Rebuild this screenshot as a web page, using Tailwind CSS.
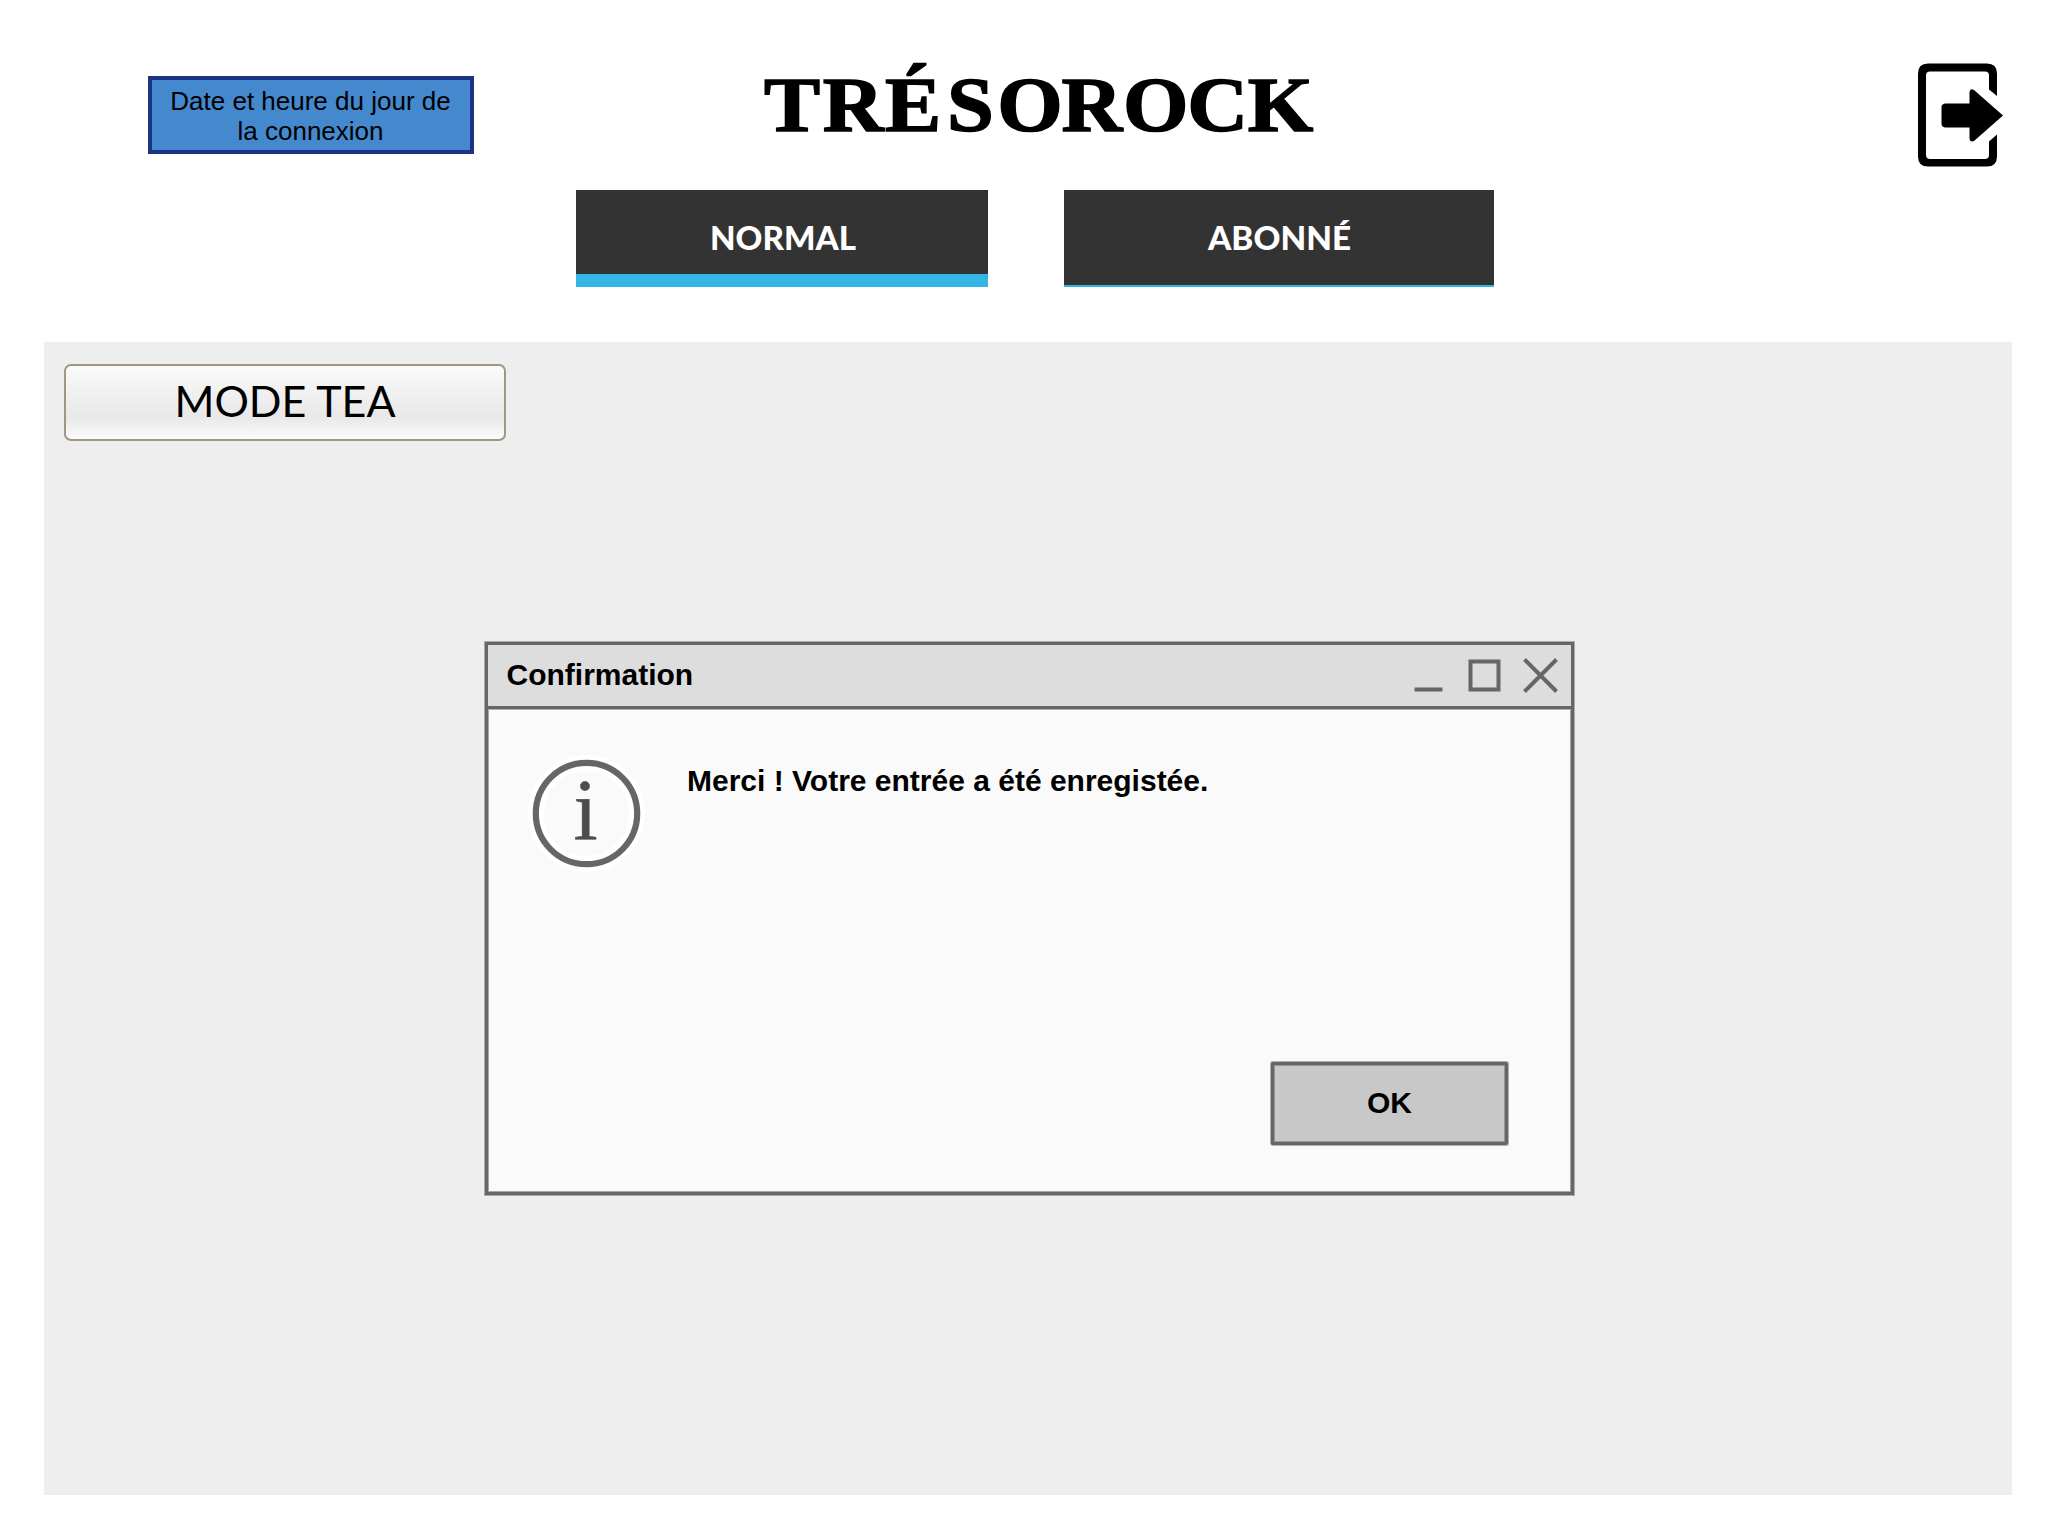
<!DOCTYPE html>
<html lang="fr">
<head>
<meta charset="utf-8">
<title>Trésorock</title>
<script src="https://cdn.jsdelivr.net/npm/@tailwindcss/browser@4"></script>
</head>
<body class="w-[2048px] h-[1536px] overflow-hidden bg-white text-black font-['Liberation_Sans',Arial,sans-serif]">
<header class="h-[190px] flex items-start">
  <div class="mt-[76px] ml-[148px] w-[326px] h-[78px] border-4 border-[#1c3283] bg-[#4488cd] text-center text-[26px] leading-[30px] pt-[6px] pr-[1px]">Date et heure du jour de<br>la connexion</div>
  <h1 class="ml-[286px] mt-[40px]">
    <svg class="block" width="560" height="120" viewBox="760 40 560 120"><text transform="translate(764 0) scale(1.08 1)" x="0 54.500 112 169.500 216 275.500 332.500 392 448" y="131.500" class="font-['Liberation_Serif',serif] font-bold text-[78px]" stroke="#000" stroke-width="1.500">TRÉSOROCK</text></svg>
  </h1>
  <button class="ml-[590px] mt-[60px]" aria-label="Déconnexion">
    <svg class="block" width="100" height="112" viewBox="1910 60 100 112">
      <path d="M1997 96V73.500Q1997 63.500 1987 63.500H1928Q1918 63.500 1918 73.500V156.500Q1918 166.500 1928 166.500H1987Q1997 166.500 1997 156.500V134.500L1989 141.500V155Q1989 159 1985 159H1930Q1926 159 1926 155V75.500Q1926 71.500 1930 71.500H1985Q1989 71.500 1989 75.500V89.500Z"/>
      <path d="M1945 103.500H1969.500V92Q1970 88 1974 90L2003 115.500L1974 141Q1970 142.500 1969.500 138.500V127.500H1945Q1941.500 127 1941.500 123.500V107Q1941.500 104 1945 103.500Z"/>
    </svg>
  </button>
</header>
<nav class="ml-[576px] flex gap-[76px] h-[97px]">
  <button class="w-[412px] bg-[#333] border-b-[13px] border-[#33b5e5]">
    <svg class="block" width="412" height="84" viewBox="576 190 412 84"><text x="710" y="250" textLength="146" lengthAdjust="spacingAndGlyphs" fill="#fff" class="font-[Lato,sans-serif] font-black text-[33px]">NORMAL</text></svg>
  </button>
  <button class="w-[430px] bg-[#333] border-b-2 border-[#33b5e5]">
    <svg class="block" width="430" height="95" viewBox="1064 190 430 95"><text x="1208" y="250" textLength="143" lengthAdjust="spacingAndGlyphs" fill="#fff" class="font-[Lato,sans-serif] font-black text-[33px]">ABONNÉ</text></svg>
  </button>
</nav>
<main class="mt-[55px] ml-[44px] w-[1968px] h-[1153px] bg-[#eee] pt-[22px] pl-[20px]">
  <button class="block w-[442px] h-[77px] rounded-[7px] border-2 border-[#a19683] bg-linear-to-b from-[#fafafa] via-[#e8e8e8] via-70% to-[#fcfcfc]">
    <svg class="block" width="438" height="73" viewBox="66 366 438 73"><text x="174.500" y="417" textLength="221" lengthAdjust="spacingAndGlyphs" class="font-[Lato,sans-serif] font-normal text-[43px]">MODE TEA</text></svg>
  </button>
  <section class="mt-[201px] ml-[421px] w-[1089px] h-[553px] border-3 border-[#666] bg-[#fafafa] shadow-[0_0_0_1px_#aaa,inset_0_0_0_1px_#a5a5a5] flex flex-col">
    <div class="h-[64px] shrink-0 bg-[#ddd] border-b-3 border-[#666] shadow-[0_1px_0_#b0b0b0] flex justify-between">
      <h2 class="pl-[18.5px] pt-[12px] text-[30px] leading-[36px] font-bold">Confirmation</h2>
      <svg class="block" width="161" height="61" viewBox="1410 645 161 61" fill="none" stroke="#666" stroke-width="4"><path d="M1414.500 689.500H1442.500M1470.500 661.500H1498.500V689.500H1470.500ZM1524.500 659.500L1556.500 691.500M1556.500 659.500L1524.500 691.500"/></svg>
    </div>
    <div class="flex pt-[40px] pl-[34px]">
      <svg class="block shrink-0" width="130" height="130" viewBox="522 749 130 130">
        <circle cx="586.500" cy="813.500" r="50.500" fill="none" stroke="#fff" stroke-width="16"/>
        <circle cx="586.500" cy="813.500" r="50.700" fill="none" stroke="#666" stroke-width="6.200"/>
        <text x="573.500" y="838.500" fill="#4d4d4d" stroke="#4d4d4d" stroke-width="0.500" class="font-['Liberation_Serif',serif] text-[87px]">i</text>
      </svg>
      <p class="pl-[35px] pt-[14px] text-[30px] leading-[36px] font-bold">Merci ! Votre entrée a été enregistée.</p>
    </div>
    <button class="mt-[183px] ml-[783px] w-[237px] h-[83px] shrink-0 rounded-[2px] border-3 border-[#666] bg-[#c8c8c8] shadow-[0_0_0_1px_#b0b0b0,inset_0_0_0_1px_#979797] text-[30px] leading-[36px] font-bold pb-[2px]">OK</button>
  </section>
</main>
</body>
</html>
